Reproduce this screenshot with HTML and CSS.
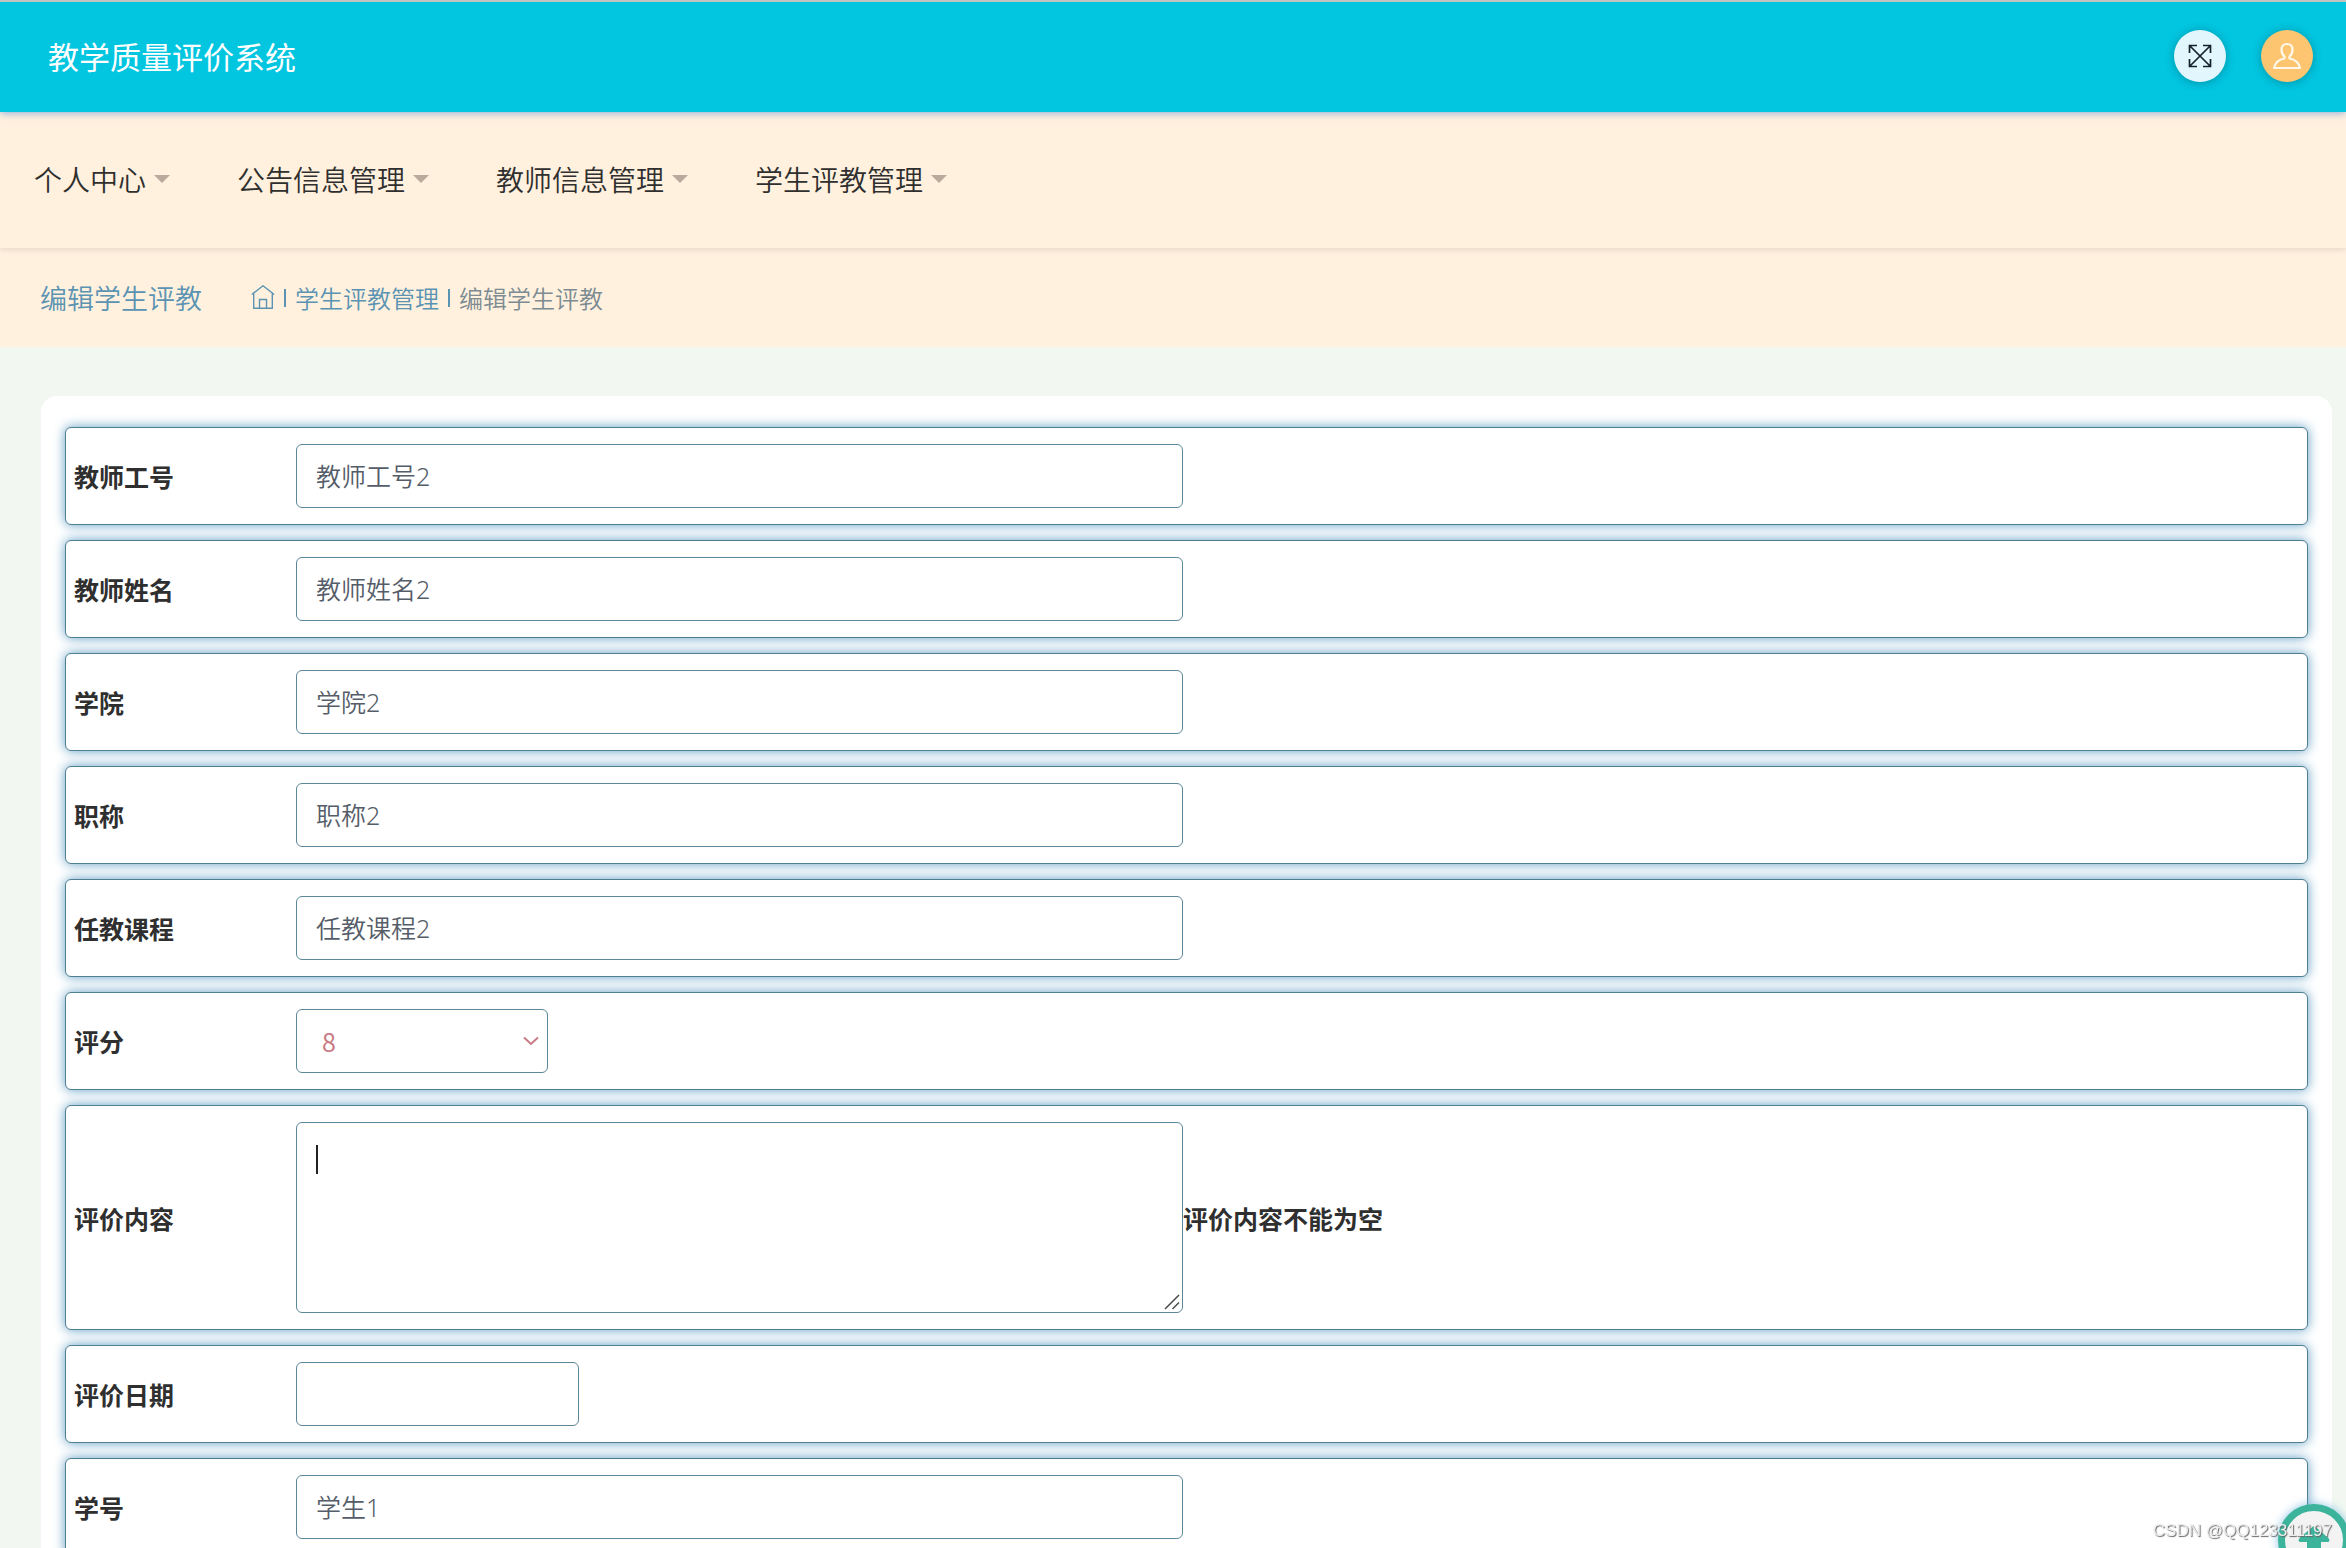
FILE: index.html
```html
<!DOCTYPE html>
<html lang="zh-CN">
<head>
<meta charset="utf-8">
<title>教学质量评价系统</title>
<link rel="stylesheet" href="styles.css">
</head>
<body>
<header class="topbar">
  <h1 class="brand">教学质量评价系统</h1>
  <div class="tools">
    <button type="button" class="round round-light" aria-label="全屏">
      <svg width="24" height="24" viewBox="0 0 24 24" fill="none" stroke="#15202b" stroke-width="1.7"><path d="M2 2 22 22M22 2 2 22M1.500 9V1.500H9M15 1.500h7.500V9M22.500 15v7.500H15M9 22.500H1.500V15"/></svg>
    </button>
    <button type="button" class="round round-user" aria-label="用户">
      <svg width="28" height="28" viewBox="0 0 28 28" fill="none" stroke="#fff8ea" stroke-width="2.200" stroke-linejoin="round"><path d="M11.500 16.500v-2C9.500 13 8.500 11 8.500 7.500 8.500 4 10.500 2 14 2s5.500 2 5.500 5.500c0 3.500-1 5.500-3 7v2c5 .8 9.200 4 10.500 9.500H1c1.300-5.500 5.500-8.700 10.500-9.500z"/></svg>
    </button>
  </div>
</header>
<nav class="menu">
  <a href="#" class="menu-item">个人中心<span class="caret"></span></a>
  <a href="#" class="menu-item">公告信息管理<span class="caret"></span></a>
  <a href="#" class="menu-item">教师信息管理<span class="caret"></span></a>
  <a href="#" class="menu-item">学生评教管理<span class="caret"></span></a>
</nav>
<div class="crumbs">
  <h2 class="crumb-title">编辑学生评教</h2>
  <div class="trail">
    <a href="#" class="home" aria-label="首页"><svg width="24" height="26" viewBox="0 0 24 26" fill="none" stroke="#5b93b3" stroke-width="1.400"><path d="M.8 9.500 12 .8l11.200 8.700M2.700 8.500V23.300H21.300V8.500M8.500 23V14.500h7V23"/></svg></a>
    <span class="bar"></span>
    <a href="#">学生评教管理</a>
    <span class="bar"></span>
    <span class="here">编辑学生评教</span>
  </div>
</div>
<main class="content">
  <form class="card">
    <div class="row"><label for="no">教师工号</label><input class="field" id="no" type="text" value="教师工号2"></div>
    <div class="row"><label for="name">教师姓名</label><input class="field" id="name" type="text" value="教师姓名2"></div>
    <div class="row"><label for="college">学院</label><input class="field" id="college" type="text" value="学院2"></div>
    <div class="row"><label for="rank">职称</label><input class="field" id="rank" type="text" value="职称2"></div>
    <div class="row"><label for="course">任教课程</label><input class="field" id="course" type="text" value="任教课程2"></div>
    <div class="row"><label for="score">评分</label>
      <div class="select-wrap">
        <select class="field score" id="score"><option>8</option></select>
        <svg class="chevron" width="16" height="10" viewBox="0 0 16 10" fill="none" stroke="#c97b84" stroke-width="2"><path d="M1 1.500 8 8l7-6.500"/></svg>
      </div>
    </div>
    <div class="row"><label for="remark">评价内容</label>
      <div class="area-wrap">
        <textarea class="field area" id="remark"></textarea><span class="cursor"></span>
        <svg class="grip" width="16" height="16" viewBox="0 0 16 16" fill="none" stroke="#4a4a4a" stroke-width="1.500"><path d="M1 15 15 1M8.500 15 15 8.500"/></svg>
      </div>
      <strong class="error">评价内容不能为空</strong>
    </div>
    <div class="row"><label for="date">评价日期</label><input class="field date" id="date" type="text"></div>
    <div class="row"><label for="sno">学号</label><input class="field" id="sno" type="text" value="学生1"></div>
  </form>
</main>
<a href="#" class="to-top" aria-label="返回顶部"><svg width="32" height="34" viewBox="0 0 32 34" fill="#3cb39b"><path d="M14 1.200q2-1.700 4 0L30.500 12q2.500 4-1.500 4H23V34H9V16H3Q-1 16 1.500 12z"/></svg></a>
<div class="watermark">CSDN @QQ123311197</div>
</body>
</html>
```
FILE: styles.css
```css
* { box-sizing: border-box; }

body {
  margin: 0;
  height: 100vh;
  display: flex;
  flex-direction: column;
  overflow: hidden;
  background: #f2f8f1;
  border-top: 2px solid #c3c3c3;
  color: #2f2f2f;
  font-family: "Noto Sans", "Noto Sans CJK SC", sans-serif;
  font-size: 25px;
}

a { color: inherit; text-decoration: none; }

h1, h2 { margin: 0; }

.topbar {
  position: relative;
  z-index: 2;
  flex: none;
  height: 110px;
  padding: 0 33px 2px 48px;
  display: flex;
  align-items: center;
  justify-content: space-between;
  background: #02c5df;
  box-shadow: 0 1px 8px rgba(60, 130, 220, 0.6);
}

.brand {
  color: #fff;
  font-family: "Noto Sans CJK SC", sans-serif;
  font-size: 31px;
  font-weight: 400;
  line-height: 48px;
}

.tools { display: flex; gap: 35px; }

.round {
  width: 52px;
  height: 52px;
  padding: 0;
  border: 0;
  border-radius: 50%;
  display: flex;
  align-items: center;
  justify-content: center;
  box-shadow: 0 1px 8px rgba(0, 70, 90, 0.4);
}

.round-light { background: #e2f7fd; }
.round-user { background: #fec571; }

.menu {
  position: relative;
  z-index: 1;
  flex: none;
  height: 136px;
  padding: 0 34px 2px;
  display: flex;
  align-items: center;
  gap: 67px;
  background: #fff1de;
  box-shadow: 0 1px 6px rgba(90, 90, 90, 0.2);
  font-family: "Noto Sans CJK SC", sans-serif;
  font-size: 28px;
  font-weight: 350;
}

.menu-item { display: flex; align-items: center; gap: 8px; }

.caret {
  border: 8px solid transparent;
  border-top-color: #b8aa9c;
  border-bottom: 0;
}

.crumbs {
  flex: none;
  height: 99px;
  padding: 0 40px;
  display: flex;
  align-items: center;
  gap: 49px;
  background: #fff1de;
  color: #5b93b3;
  font-family: "Noto Sans CJK SC", sans-serif;
  font-weight: 350;
}

.crumb-title { font-size: 27px; font-weight: 350; }

.trail { display: flex; align-items: center; gap: 9px; font-size: 24px; }

.home { display: flex; }

.bar { width: 2px; height: 18px; background: #5b93b3; }

.here { color: #7d8b92; }

.content {
  flex: 1;
  min-height: 0;
  padding: 49px 14px 49px 41px;
  overflow: auto;
  scrollbar-width: none;
}

.card {
  padding: 31px 24px;
  display: flex;
  flex-direction: column;
  gap: 15px;
  border-radius: 16px;
  background: #fff;
}

.row {
  padding: 16px 8px;
  display: flex;
  align-items: center;
  border: 1px solid #4f7f93;
  border-radius: 6px;
  background: #fff;
  box-shadow: 0 0 12px #5f9dc2;
}

.row label { flex: none; width: 222px; }

.row label, .error {
  font-family: "Noto Sans CJK SC", sans-serif;
  font-weight: 700;
  line-height: 36px;
}

.field {
  display: block;
  width: 887px;
  height: 64px;
  padding: 0 19px 2px;
  border: 1px solid #5b8799;
  border-radius: 6px;
  background: #fff;
  color: #555d68;
  font-family: "Noto Sans", "Noto Sans CJK SC", sans-serif;
  font-size: 25px;
  font-weight: 350;
}

.select-wrap, .area-wrap { position: relative; }

.score {
  width: 252px;
  padding: 0 25px;
  appearance: none;
  color: #c97b84;
  font-family: "Noto Sans CJK SC", sans-serif;
  font-weight: 400;
}

.chevron { position: absolute; right: 9px; top: 27px; pointer-events: none; }

.area { height: 191px; padding: 19px; resize: both; }

.area::-webkit-resizer { background: transparent; }

.grip { position: absolute; right: 3px; bottom: 3px; pointer-events: none; }

.cursor {
  position: absolute;
  left: 20px;
  top: 23px;
  width: 2px;
  height: 29px;
  background: #222;
}

.date { width: 283px; }

.to-top {
  position: fixed;
  right: -4px;
  bottom: -28px;
  width: 72px;
  height: 72px;
  padding-top: 15px;
  display: flex;
  justify-content: center;
  border: 7px solid #3cb39b;
  border-radius: 50%;
  background: #f3f3f3;
  box-shadow: 0 0 10px rgba(90, 170, 220, 0.7);
}

.watermark {
  position: fixed;
  right: 14px;
  bottom: 7px;
  color: #eee;
  font-family: "Liberation Sans", sans-serif;
  font-size: 17px;
  line-height: 20px;
  text-shadow: 1px 1px 1px #666;
}
```
